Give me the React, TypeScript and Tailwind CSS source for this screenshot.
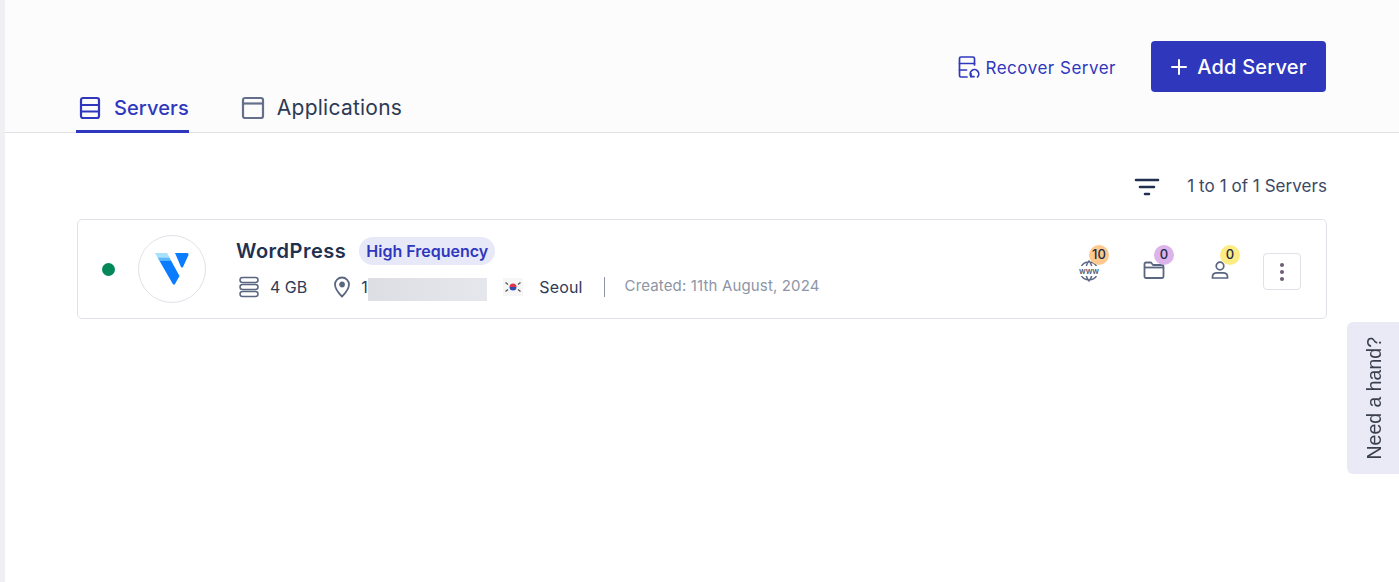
import React from "react";

function Badge({ text, color }: { text: string; color: string }) {
  return (
    <span className={`absolute -top-[15px] left-[11px] flex h-5 w-5 items-center justify-center rounded-full text-[13px] font-medium text-[#1f2a44] ${color}`}>
      {text}
    </span>
  );
}

export default function App() {
  return (
    <div className="relative flex h-[582px] w-full overflow-hidden bg-white text-[#22304f] [font-family:Inter,'Liberation_Sans',sans-serif]">
      <div className="w-[5px] shrink-0 bg-[#f0f0f2]" />
      <main className="min-w-0 flex-1">
        <header className="h-[133px] border-b border-[#e0e0e4] bg-[#fcfcfd] pl-[71px] pr-[73px]">
          <div className="flex justify-end pt-[41px]">
            <div className="mr-[35px] flex items-center gap-[5px] text-[#2f38bd]">
              <svg width="22" height="24" viewBox="0 0 22 24" fill="none" stroke="currentColor" strokeWidth="1.7" strokeLinecap="round" strokeLinejoin="round">
                <path d="M9 22H3a1.5 1.5 0 0 1-1.5-1.5v-17A1.5 1.5 0 0 1 3 2h12a1.5 1.5 0 0 1 1.500 1.500V10" />
                <path d="M1.500 8.500h15M1.500 15h7" />
                <path d="M13 21.500a4.300 4.300 0 1 1 6.500 .5" />
                <path d="M13 18.500v3.200h3" />
              </svg>
              <span className="pt-[4px] text-[17px] tracking-[0.5px]">Recover Server</span>
            </div>
            <button className="flex h-[51px] w-[175px] items-center justify-center gap-[9px] rounded-[4px] bg-[#2f38bd] text-[20px] font-medium tracking-[0.2px] text-white">
              <svg width="18" height="18" viewBox="0 0 18 18" stroke="currentColor" strokeWidth="2" strokeLinecap="round">
                <path d="M9 2v14M2 9h14" />
              </svg>
              Add Server
            </button>
          </div>
          <nav className="-mt-[10px] flex h-[51px] gap-[52px]">
            <div className="flex h-[51px] items-center gap-[13px] border-b-[3px] border-[#2f38bd] pl-[3px] pt-[4px] text-[#2f38bd]">
              <svg width="22" height="24" viewBox="0 0 22 24" fill="none" stroke="currentColor" strokeWidth="2.200">
                <rect x="2" y="2" width="18" height="20" rx="2" />
                <path d="M2 9h18M2 15.500h18" />
              </svg>
              <span className="text-[20px] font-medium tracking-[0.1px]">Servers</span>
            </div>
            <div className="flex h-[51px] items-center gap-[12px] pb-[3px] pt-[4px]">
              <svg width="24" height="24" viewBox="0 0 24 24" fill="none" stroke="#64708a" strokeWidth="2.200">
                <rect x="2" y="2" width="20" height="20" rx="2" />
                <path d="M2 7.500h20" />
              </svg>
              <span className="text-[21px] tracking-[0.25px] text-[#2c3a55]">Applications</span>
            </div>
          </nav>
        </header>

        <section className="px-[72px]">
          <div className="flex h-[86px] items-center justify-end pt-[22px]">
            <svg width="26" height="20" viewBox="0 0 26 20" fill="none" stroke="#22304f" strokeWidth="2.600" strokeLinecap="round" className="mr-[27px]">
              <path d="M2 3h22M6 10h14M11 17h4" />
            </svg>
            <span className="text-[17px] tracking-[0.05px] text-[#3c4963]">1 to 1 of 1 Servers</span>
          </div>

          <article className="flex h-[100px] items-center rounded-[5px] border border-[#e1e2e8] bg-white pl-[24px] pr-[25px]">
            <span className="h-[13px] w-[13px] rounded-full bg-[#03885a]" />
            <div className="ml-[23px] flex h-[68px] w-[68px] items-center justify-center rounded-full border border-[#e1e2e8]">
              <svg width="34" height="34" viewBox="0 0 34 34">
                <path d="M0 1h12l2.500 4.500H2.600z" fill="#a8e1fc" />
                <path d="M2.600 5.500h11.900l1.500 3H4.300z" fill="#58b9fb" />
                <path d="M4.300 8.500H16l8.500 15.500-4.500 8q-1 1.500-2.200 0z" fill="#0a7cff" />
                <path d="M20 1h11.500q2.500 0 2 2L28 15q-1 1.200-2 0z" fill="#0a7cff" />
              </svg>
            </div>
            <div className="ml-[30px] min-w-0 pb-[2px]">
              <div className="flex h-[28px] items-center gap-[13px]">
                <span className="text-[20px] font-semibold tracking-[0.5px] text-[#22304f]">WordPress</span>
                <span className="flex h-[28px] items-center rounded-full bg-[#e8e9f8] pl-[7px] pr-[6.500px] text-[16px] font-semibold text-[#2f38bd]">High Frequency</span>
              </div>
              <div className="mt-[9px] flex h-[26px] items-center text-[16px] text-[#2f3b57]">
                <svg width="22" height="22" viewBox="0 0 22 22" fill="none" stroke="#5a6680" strokeWidth="1.500" className="ml-[2px] mr-[10px]">
                  <rect x="2" y="1.500" width="18" height="5" rx="2.500" />
                  <rect x="2" y="8.500" width="18" height="5" rx="2.500" />
                  <rect x="2" y="15.500" width="18" height="5" rx="2.500" />
                </svg>
                <span>4 GB</span>
                <svg width="18" height="22" viewBox="0 0 18 22" fill="none" stroke="#5a6680" strokeWidth="1.800" className="ml-[26px] mr-[10px]">
                  <path d="M9 20.500S2 13.500 2 8.500a7 7 0 0 1 14 0c0 5-7 12-7 12z" />
                  <circle cx="9" cy="8.500" r="2" fill="#5a6680" />
                </svg>
                <span className="w-[7px]">1</span>
                <span className="mt-[6px] h-[23px] w-[119px] bg-gradient-to-r from-[#dcdee4] via-[#e2e3e8] to-[#e6e7ec]" />
                <svg width="22" height="22" viewBox="0 0 22 22" className="mx-[15px] blur-[0.6px]">
                  <rect x="1" y="2" width="20" height="18" fill="#f6f6f6" />
                  <path d="M7.500 11a3.500 3.500 0 0 1 7 0z" fill="#e0344b" />
                  <path d="M7.500 11a3.500 3.500 0 0 0 7 0z" fill="#2f4fb0" />
                  <path d="M3.500 6.500l2.500 2M3.500 15.500l2.500-2M18.500 6.500l-2.500 2M18.500 15.500l-2.500-2" stroke="#555" strokeWidth="1.300" />
                </svg>
                <span className="tracking-[0.15px]">Seoul</span>
                <span className="ml-[21px] mr-[20px] h-[20px] w-px bg-[#8b93a5]" />
                <span className="text-[15px] tracking-[0.15px] text-[#8d95a6]">Created: 11th August, 2024</span>
              </div>
            </div>

            <div className="ml-auto flex items-center">
              <div className="relative mr-[43px] mt-[2px] h-[20px] w-[22px]">
                <svg width="22" height="22" viewBox="0 0 22 22" fill="none" stroke="#5a6680" strokeWidth="1.500">
                  <path d="M3 7a9 9 0 0 1 16 0M3 15a9 9 0 0 0 16 0M8 7q1-4 3-6 2 2 3 6M8 15q1 4 3 6 2-2 3-6" />
                </svg>
                <span className="absolute left-[-1px] top-[6px] w-[24px] bg-white text-center text-[8px] font-semibold leading-[10px] text-[#4f5b75]">www</span>
                <Badge text="10" color="bg-[#fdc98e]" />
              </div>
              <div className="relative mr-[44px] mt-[2px] h-[20px] w-[22px]">
                <svg width="22" height="20" viewBox="0 0 22 20" fill="none" stroke="#5a6680" strokeWidth="1.800" strokeLinejoin="round">
                  <path d="M1.500 4a1.500 1.500 0 0 1 1.500-1.500h5l2 2.500h9a1.500 1.500 0 0 1 1.500 1.500V16.500A1.500 1.500 0 0 1 19 18H3a1.500 1.500 0 0 1-1.500-1.500z" />
                  <path d="M1.500 7.500h19" />
                </svg>
                <Badge text="0" color="bg-[#dcb3eb]" />
              </div>
              <div className="relative mr-[32px] mt-[2px] h-[20px] w-[22px]">
                <svg width="22" height="20" viewBox="0 0 22 20" fill="none" stroke="#5a6680" strokeWidth="1.700">
                  <circle cx="11" cy="6" r="3.800" />
                  <path d="M3.500 18v-1.500Q3.500 13 8 12.800h6q4.500.2 4.500 3.700V18z" />
                </svg>
                <Badge text="0" color="bg-[#fdeb84]" />
              </div>
              <button className="mt-[5px] flex h-[37px] w-[38px] flex-col items-center justify-center gap-[3px] rounded-[4px] border border-[#e1e2e8] bg-white">
                <span className="h-1 w-1 rounded-full bg-[#6b5d78]" />
                <span className="h-1 w-1 rounded-full bg-[#6b5d78]" />
                <span className="h-1 w-1 rounded-full bg-[#6b5d78]" />
              </button>
            </div>
          </article>
        </section>
      </main>

      <div className="absolute left-[1347px] top-[322px] flex h-[152px] w-[52px] items-center justify-center rounded-l-[6px] bg-[#e9eaf6] pl-[3px]">
        <span className="rotate-180 text-[19.500px] text-[#3a3f4d] [font-family:'Liberation_Sans',sans-serif] [writing-mode:vertical-rl]">Need a hand?</span>
      </div>
    </div>
  );
}
